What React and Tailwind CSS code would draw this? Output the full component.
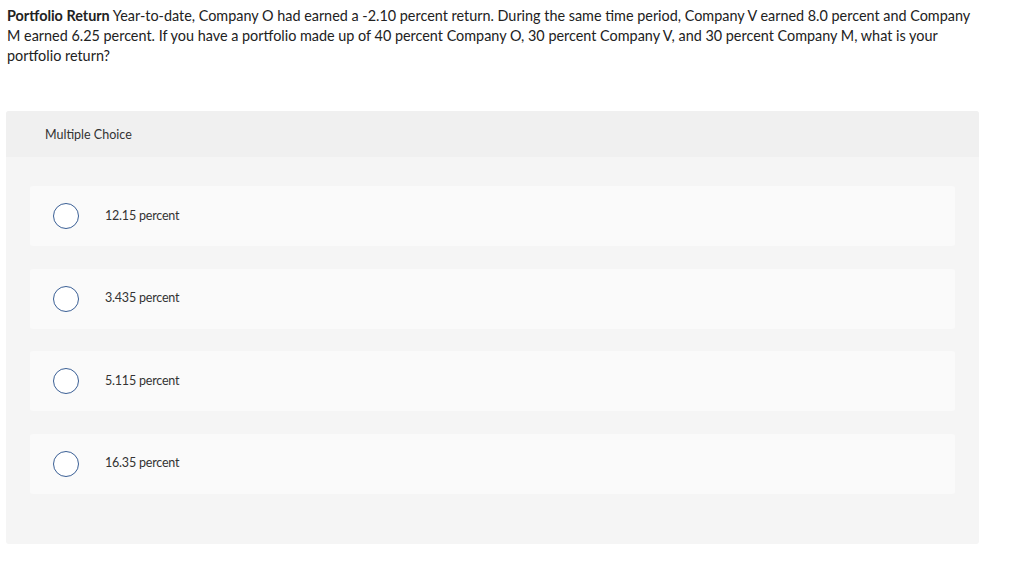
import React from "react";

const choices = ["12.15 percent", "3.435 percent", "5.115 percent", "16.35 percent"];

const App = () => {
  return (
    <div className="min-h-[561px] bg-white text-[#222] font-['Lato','Liberation_Sans',sans-serif]">
      {/* Question */}
      <p className="pl-[7px] pr-[20px] pt-[6px] text-[14.4px] leading-[20px] whitespace-nowrap">
        <b>Portfolio Return</b> Year-to-date, Company O had earned a -2.10 percent return. During the same
        time period, Company V earned 8.0 percent and Company
        <br />
        M earned 6.25 percent. If you have a portfolio made up of 40 percent Company O, 30 percent Company V,
        and 30 percent Company M, what is your
        <br />
        portfolio return?
      </p>

      {/* Multiple choice panel */}
      <div className="ml-[6px] mt-[45px] w-[973px] rounded-[3px] bg-[#f5f5f5] pb-[50px]">
        <div className="h-[46px] rounded-t-[3px] bg-[#f0f0f0] pl-[39px] pt-[15px] text-[12.5px] text-[#333]">
          Multiple Choice
        </div>
        <div className="flex flex-col gap-[22.5px] px-[24px] pt-[29px]">
          {choices.map((c) => (
            <div key={c} className="flex h-[60px] items-center rounded-[3px] bg-[#fafafa] pl-[23px]">
              <span className="h-[26px] w-[26px] rounded-full border border-[#3a5f95] bg-white" />
              <span className="ml-[26px] text-[12.5px] tracking-[-0.2px] text-[#333]">{c}</span>
            </div>
          ))}
        </div>
      </div>
    </div>
  );
};

export default App;
